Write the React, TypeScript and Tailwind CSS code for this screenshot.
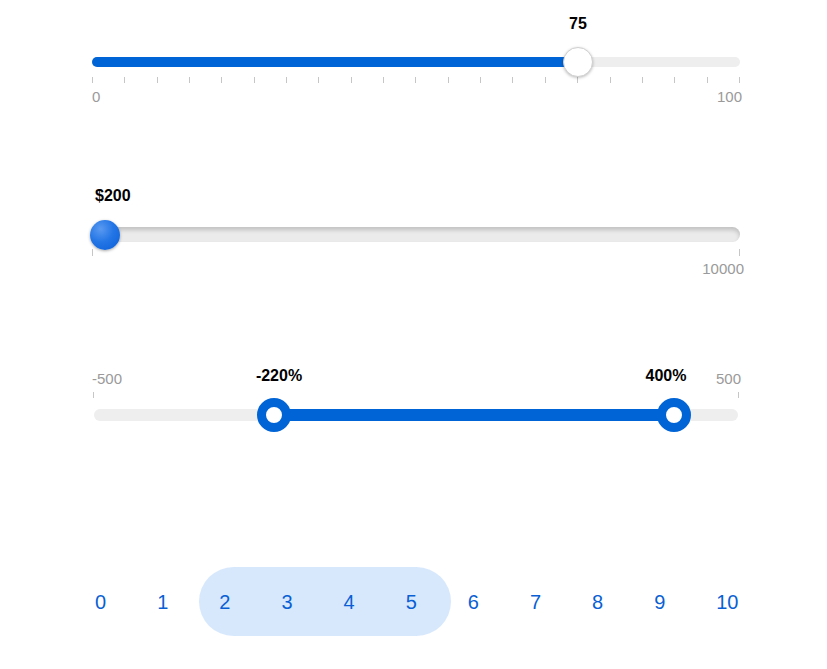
import React from 'react';

const blue = 'bg-[#0064d6]';

function Ticks({ count, className }: { count: number; className: string }) {
  return (
    <div className={`flex justify-between ${className}`}>
      {Array.from({ length: count }).map((_, i) => (
        <span key={i} className="w-px h-full bg-[#c6c6c6]" />
      ))}
    </div>
  );
}

export default function App() {
  return (
    <div className="w-[827px] h-[669px] bg-white overflow-hidden font-['Liberation_Sans',Arial,sans-serif]">
      {/* basic slider with ticks */}
      <div className="relative ml-[92px] w-[648px] pt-[57px]">
        <div className="absolute top-[15px] -translate-x-1/2 text-[16px] leading-[18px] font-bold text-black" style={{ left: '75%' }}>
          75
        </div>
        <div className="relative h-[10px] rounded-full bg-[#eeeeee]">
          <div className={`absolute inset-y-0 left-0 rounded-full ${blue}`} style={{ width: '75%' }} />
          <div
            className="absolute top-1/2 w-[30px] h-[30px] -translate-x-1/2 -translate-y-1/2 rounded-full bg-white border border-[#d0d0d0] shadow-[0_1px_3px_rgba(0,0,0,0.25)]"
            style={{ left: '75%' }}
          />
        </div>
        <Ticks count={21} className="mt-[10px] h-[6px]" />
        <div className="mt-[5px] flex justify-between text-[15px] leading-[17px] text-[#9a9a9a]">
          <span>0</span>
          <span className="-mr-[2px]">100</span>
        </div>
      </div>

      {/* money slider */}
      <div className="relative ml-[92px] w-[648px] mt-[122px]">
        <div className="relative h-[15px] rounded-full bg-[#ebebeb] shadow-[inset_0_3px_4px_rgba(0,0,0,0.18)]">
          <div className="absolute -top-[40px] left-[3px] text-[16px] leading-[18px] font-bold text-black">$200</div>
          <div className="absolute top-1/2 left-[13px] w-[30px] h-[30px] -translate-x-1/2 -translate-y-1/2 rounded-full bg-[radial-gradient(circle_at_35%_30%,#5a9af0_0%,#2476e6_45%,#0a5ed6_100%)] shadow-[0_1px_3px_rgba(0,0,0,0.35)]" />
        </div>
        <Ticks count={2} className="mt-[7px] h-[7px]" />
        <div className="mt-[4px] flex justify-end text-[15px] leading-[17px] text-[#9a9a9a]">
          <span className="-mr-[4px]">10000</span>
        </div>
      </div>

      {/* range slider */}
      <div className="relative ml-[92px] w-[648px] mt-[93px]">
        <div className="flex justify-between text-[15px] leading-[17px] text-[#9a9a9a]">
          <span>-500</span>
          <span className="-mr-[1px]">500</span>
        </div>
        <Ticks count={2} className="mt-[5px] mx-[1px] h-[6px]" />
        <div className="relative mt-[11px] mx-[2px] h-[12px] rounded-full bg-[#eeeeee]">
          <div className={`absolute inset-y-0 ${blue}`} style={{ left: 180, width: 400 }} />
          <div className="absolute -top-[42px] -translate-x-1/2 text-[16px] leading-[18px] font-bold text-black" style={{ left: 185 }}>
            -220%
          </div>
          <div className="absolute -top-[42px] -translate-x-1/2 text-[16px] leading-[18px] font-bold text-black" style={{ left: 572 }}>
            400%
          </div>
          <div className="absolute top-1/2 w-[34px] h-[34px] -translate-x-1/2 -translate-y-1/2 rounded-full bg-white border-[9px] border-[#0064d6]" style={{ left: 180 }} />
          <div className="absolute top-1/2 w-[34px] h-[34px] -translate-x-1/2 -translate-y-1/2 rounded-full bg-white border-[9px] border-[#0064d6]" style={{ left: 580 }} />
        </div>
      </div>

      {/* number range */}
      <div className="mt-[146px] h-[69px] flex items-center pl-[95px] text-[20px] text-[#0a5fd4]">
        <div className="flex items-center gap-[51px]">
          <span>0</span>
          <span>1</span>
        </div>
        <div className="ml-[31px] h-full flex items-center gap-[51px] pl-[20px] pr-[34px] rounded-full bg-[#d7e8fd]">
          <span>2</span>
          <span>3</span>
          <span>4</span>
          <span>5</span>
        </div>
        <div className="ml-[17px] flex items-center gap-[51px]">
          <span>6</span>
          <span>7</span>
          <span>8</span>
          <span>9</span>
          <span>10</span>
        </div>
      </div>
    </div>
  );
}
